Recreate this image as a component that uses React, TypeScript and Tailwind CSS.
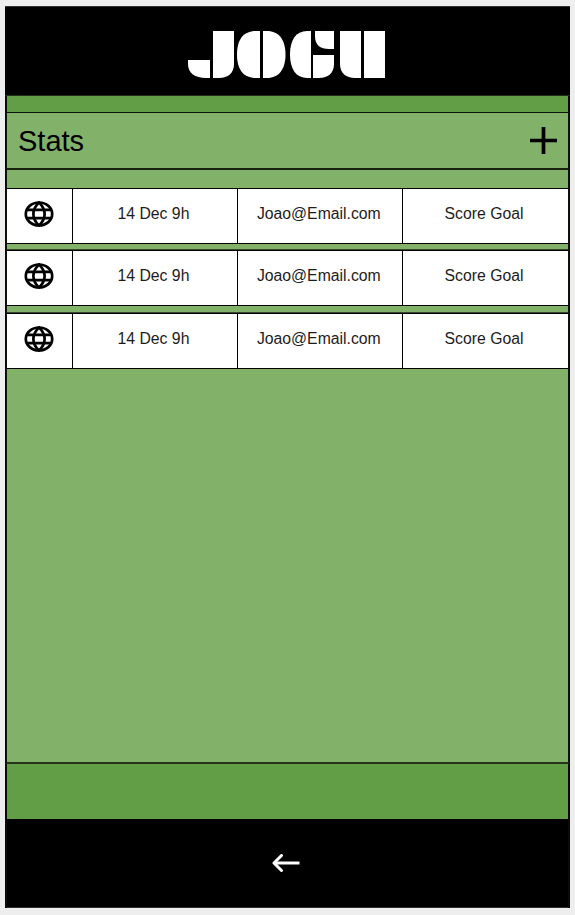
function Logo() {
  return (
    <svg className="absolute left-[183px] top-[23px] h-[49px] w-[198px]" viewBox="0 0 198 49" fill="white" aria-label="JOGU">
      <path d="M0 30H22V48H18C7 48 0 43 0 34Z" />
      <path d="M25 1H46V34C46 43 40 48 31 48H25Z" />
      <path d="M72 1V48H68C55 48 49 39 49 24.5C49 10 55 1 68 1Z" />
      <path d="M75 1H79C91 1 97.500 10 97.500 24.500C97.500 39 91 48 79 48H75Z" />
      <path d="M123 1V48H119C108 48 102 39 102 24.500C102 10 108 1 119 1Z" />
      <path d="M127 1H146V19H141C132 19 127 15 127 6Z" />
      <path d="M125 25H146V34C146 43 140 48 131 48H125Z" />
      <path d="M152 1H173V48H167C158 48 152 43 152 34Z" />
      <path d="M176 1H197V48H176Z" />
    </svg>
  );
}

function Globe() {
  return (
    <svg className="h-[26px] w-[30px]" viewBox="0 0 30 26" fill="none" stroke="black" strokeWidth="2.7">
      <ellipse cx="15" cy="13" rx="13.200" ry="11.500" />
      <path d="M15 1.500C7.500 8.500 7.500 17.500 15 24.500C22.500 17.500 22.500 8.500 15 1.500Z" />
      <path d="M2.500 8.800H27.500M2.500 17.200H27.500" />
    </svg>
  );
}

const cell = "flex items-center justify-center border-r border-black pb-[5px]";

function Row() {
  return (
    <div className="grid h-[56px] shrink-0 grid-cols-[66px_165px_165px_166px] border-y border-black bg-white text-[16px] text-[#1c1c1c]">
      <div className={`${cell} pr-[1px]`}><Globe /></div>
      <div className={`${cell} pr-[3px]`}><span className="scale-x-[0.985]">14 Dec 9h</span></div>
      <div className={`${cell} pr-[3px]`}><span className="scale-x-[0.985]">Joao@Email.com</span></div>
      <div className="flex items-center justify-center pb-[5px] pr-[4px]"><span className="scale-x-[0.985]">Score Goal</span></div>
    </div>
  );
}

export default function App() {
  return (
    <div className="h-[915px] w-[575px] overflow-hidden bg-[#eeeeee] pl-[5px] pt-[6px] font-['Liberation_Sans',Arial,sans-serif] text-black">
      <div className="flex h-[902px] w-[565px] flex-col border-l-2 border-r-2 border-[#0a0a0a] bg-[#629e45]">
        <header className="relative -ml-[2px] h-[90px] w-[565px] shrink-0 border-b border-t border-b-[#1d2f15] border-t-[#333] bg-black">
          <Logo />
        </header>
        <div className="h-[16px] shrink-0" />
        <main className="-ml-[1px] flex h-[652px] w-[563px] shrink-0 flex-col border border-b-2 border-[#0d120b] border-b-[#26341f] bg-[#82b16a]">
          <div className="flex h-[57px] w-full shrink-0 items-center justify-between border-b-2 border-[#18210f] pl-[11px] pr-[11px]">
            <h1 className="text-[29px] leading-[30px]">Stats</h1>
            <svg className="h-[27px] w-[27px]" viewBox="0 0 27 27" stroke="black" strokeWidth="3.7">
              <path d="M0 13.500H27M13.500 0V27" />
            </svg>
          </div>
          <div className="mt-[18px] flex flex-col">
            <Row />
            <div className="h-[6px] border-b border-[#33452a]" />
            <Row />
            <div className="h-[7px] border-b border-[#33452a]" />
            <Row />
          </div>
        </main>
        <div className="h-[55px] shrink-0" />
        <footer className="flex grow items-center justify-center border-b border-[#333] bg-black pr-[3px]">
          <svg className="h-[18px] w-[28px]" viewBox="0 0 28 18" fill="none" stroke="white" strokeWidth="3" strokeLinejoin="round">
            <path d="M2 9H27.500" />
            <path d="M9.500 1.500L2 9L9.500 16.500" strokeLinecap="round" />
          </svg>
        </footer>
      </div>
    </div>
  );
}
